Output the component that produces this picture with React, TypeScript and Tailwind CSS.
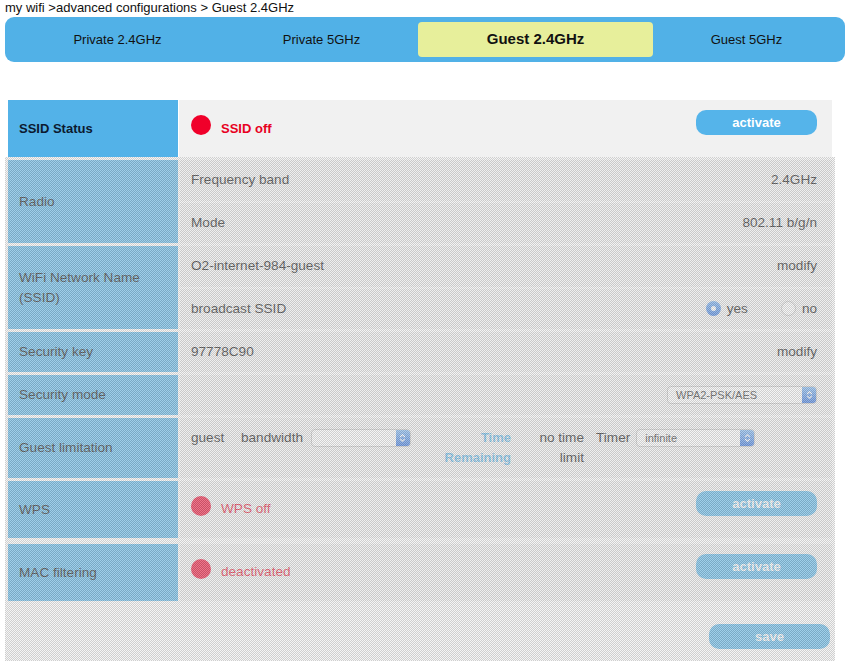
import React from "react";

const tabs = [
  { label: "Private 2.4GHz", w: "w-[215px]", active: false },
  { label: "Private 5GHz", w: "w-[193px]", active: false },
  { label: "Guest 2.4GHz", w: "w-[235px]", active: true },
  { label: "Guest 5GHz", w: "w-[187px]", active: false },
];

function Chevrons() {
  return (
    <svg width="7" height="10" viewBox="0 0 7 10">
      <path d="M1.2 4 L3.5 1.7 L5.8 4 M1.2 6 L3.5 8.3 L5.8 6" stroke="white" strokeWidth="1.1" fill="none" />
    </svg>
  );
}

function FakeSelect({ w, text }: { w: string; text?: string }) {
  return (
    <div className={`${w} h-[18px] flex overflow-hidden rounded-[4px] border border-[#c6c6c6] bg-white`}>
      <span className="flex-1 pl-[8px] text-[11px] leading-[16px] text-[#222]">{text}</span>
      <span className="flex w-[14px] items-center justify-center bg-gradient-to-b from-[#78b6f6] to-[#2d6ee0]">
        <Chevrons />
      </span>
    </div>
  );
}

function Row({ label, h, children }: { label: React.ReactNode; h: string; children: React.ReactNode }) {
  return (
    <div className={`flex gap-[2px] ${h}`}>
      <div className="flex w-[170px] shrink-0 items-center bg-[#53b2e8] pl-[11px] pr-[24px] leading-[20px] text-black">
        {label}
      </div>
      <div className="flex flex-1 flex-col gap-[2px]">{children}</div>
    </div>
  );
}

function Line({ children }: { children: React.ReactNode }) {
  return (
    <div className="flex flex-1 items-center justify-between bg-[#f2f2f2] pl-[11px] pr-[15px] text-black">
      {children}
    </div>
  );
}

function Pill({ label, w = "w-[121px]" }: { label: string; w?: string }) {
  return (
    <button className={`${w} h-[25px] rounded-[10px] bg-[#55b4ea] text-[13px] font-bold text-white`}>
      {label}
    </button>
  );
}

function Dot() {
  return <span className="mb-[8px] h-[20px] w-[20px] shrink-0 rounded-full bg-[#f0002a]" />;
}

export default function App() {
  return (
    <div className="flex h-[661px] w-[850px] flex-col overflow-hidden bg-white font-['Liberation_Sans',Arial,sans-serif] text-[#111]">
      <div className="pl-[5px] text-[13px] leading-[16px]">my wifi &gt;advanced configurations &gt; Guest 2.4GHz</div>

      {/* tabs */}
      <div className="mx-[5px] mt-[1px] flex h-[45px] items-center rounded-[9px] bg-[#51b1e7] px-[5px]">
        {tabs.map((t) => (
          <div
            key={t.label}
            className={`${t.w} flex h-[35px] items-center justify-center ${
              t.active ? "rounded-[4px] bg-[#e7ef9b] text-[15px] font-bold" : "text-[13px]"
            } text-[#111]`}
          >
            {t.label}
          </div>
        ))}
      </div>

      <div className="ml-[5px] mt-[38px] flex w-[830px] flex-1 flex-col text-[13.6px]">
        {/* SSID status */}
        <div className="flex h-[57px] gap-[1px] px-[3px]">
          <div className="flex w-[170px] shrink-0 items-center bg-[#53b2e8] pl-[11px] text-[13px] font-bold text-[#0c1a30]">
            SSID Status
          </div>
          <div className="flex flex-1 items-center justify-between bg-[#f1f1f1] pl-[12px] pr-[15px]">
            <div className="flex items-center gap-[10px]">
              <Dot />
              <span className="text-[13px] font-bold text-[#e8001f]">SSID off</span>
            </div>
            <div className="mb-[12px]">
              <Pill label="activate" />
            </div>
          </div>
        </div>

        {/* disabled part */}
        <div className="relative flex flex-1 flex-col px-[3px] pt-[3px]">
          <div className="flex flex-col gap-[3px]">
            <Row label="Radio" h="h-[83px]">
              <Line>
                <span>Frequency band</span>
                <span>2.4GHz</span>
              </Line>
              <Line>
                <span>Mode</span>
                <span>802.11 b/g/n</span>
              </Line>
            </Row>

            <Row label="WiFi Network Name (SSID)" h="h-[83px]">
              <Line>
                <span>O2-internet-984-guest</span>
                <span>modify</span>
              </Line>
              <Line>
                <span>broadcast SSID</span>
                <div className="flex items-center">
                  <span className="flex h-[15px] w-[15px] items-center justify-center rounded-full bg-gradient-to-b from-[#6aaaf2] to-[#2f74e2]">
                    <span className="h-[5px] w-[5px] rounded-full bg-white" />
                  </span>
                  <span className="ml-[6px]">yes</span>
                  <span className="ml-[33px] h-[15px] w-[15px] rounded-full border border-[#c4c4c4] bg-white" />
                  <span className="ml-[6px]">no</span>
                </div>
              </Line>
            </Row>

            <Row label="Security key" h="h-[40px]">
              <Line>
                <span>97778C90</span>
                <span>modify</span>
              </Line>
            </Row>

            <Row label="Security mode" h="h-[40px]">
              <Line>
                <span />
                <FakeSelect w="w-[150px]" text="WPA2-PSK/AES" />
              </Line>
            </Row>

            <Row label="Guest limitation" h="h-[60px]">
              <div className="flex flex-1 items-center bg-[#f2f2f2] pl-[11px] text-black">
                <div className="flex items-start leading-[20px]">
                  <span className="w-[50px]">guest</span>
                  <span>bandwidth</span>
                  <div className="ml-[8px] mt-[1px]">
                    <FakeSelect w="w-[100px]" />
                  </div>
                  <div className="flex w-[100px] flex-col items-end text-[13px] font-bold text-[#4fb0e8]">
                    <span>Time</span>
                    <span>Remaining</span>
                  </div>
                  <div className="flex w-[73px] flex-col items-end">
                    <span>no time</span>
                    <span>limit</span>
                  </div>
                  <span className="ml-[12px]">Timer</span>
                  <div className="ml-[6px] mt-[1px]">
                    <FakeSelect w="w-[119px]" text="infinite" />
                  </div>
                </div>
              </div>
            </Row>

            <Row label="WPS" h="h-[57px]">
              <Line>
                <div className="flex items-center gap-[10px]">
                  <Dot />
                  <span className="text-[#e8001f]">WPS off</span>
                </div>
                <div className="mb-[12px]">
                  <Pill label="activate" />
                </div>
              </Line>
            </Row>
          </div>

          <div className="mt-[6px] flex flex-col">
            <Row label="MAC filtering" h="h-[57px]">
              <Line>
                <div className="flex items-center gap-[10px]">
                  <Dot />
                  <span className="text-[#e8001f]">deactivated</span>
                </div>
                <div className="mb-[12px]">
                  <Pill label="activate" />
                </div>
              </Line>
            </Row>
          </div>

          <div className="mt-[23px] flex justify-end pr-[2px]">
            <Pill label="save" />
          </div>

          {/* greyed-out checker overlay */}
          <div className="pointer-events-none absolute inset-0 bg-[image:repeating-conic-gradient(rgba(160,160,160,0.5)_0_25%,rgba(235,235,235,0.5)_0_50%)] bg-[length:2px_2px]" />
        </div>
      </div>
    </div>
  );
}
